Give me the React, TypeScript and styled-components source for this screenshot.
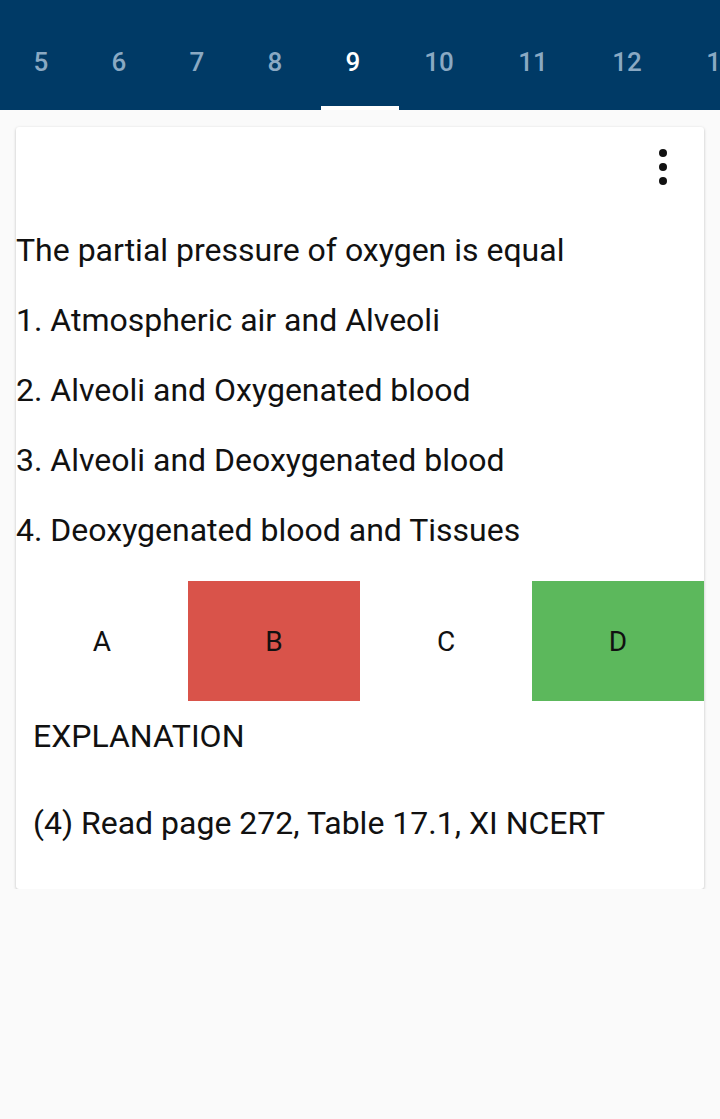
import React from 'react'
import styled, { createGlobalStyle } from 'styled-components'

const GlobalStyle = createGlobalStyle`
  body {
    margin: 0;
    background: #fafafa;
    font-family: Roboto, "Liberation Sans", sans-serif;
  }
`

const TabBar = styled.div`
  background: #003a66;
  height: 110px;
  display: flex;
  align-items: stretch;
  padding-left: 2px;
  overflow: hidden;
`

const Tab = styled.div<{ w: number; active?: boolean }>`
  position: relative;
  flex-shrink: 0;
  width: ${(p) => p.w}px;
  display: flex;
  align-items: center;
  justify-content: center;
  padding-top: 14px;
  box-sizing: border-box;
  font-size: 26px;
  font-weight: 500;
  color: ${(p) => (p.active ? '#ffffff' : '#8aa9c3')};
`

const Indicator = styled.span`
  position: absolute;
  left: 7px;
  bottom: 0;
  width: 78px;
  height: 4px;
  background: #ffffff;
`

const Card = styled.div`
  margin: 17px 16px 0;
  background: #ffffff;
  border-radius: 3px;
  box-shadow: 0 1px 3px rgba(0, 0, 0, 0.25);
  padding-bottom: 41px;
`

const CardTop = styled.div`
  height: 88px;
  display: flex;
  justify-content: flex-end;
  padding-right: 37px;
  padding-top: 22px;
  box-sizing: border-box;
`

const Kebab = styled.div`
  display: flex;
  flex-direction: column;
  gap: 6px;

  span {
    width: 8px;
    height: 8px;
    border-radius: 50%;
    background: #111;
  }
`

const Line = styled.div`
  height: 70px;
  display: flex;
  align-items: center;
  font-size: 32px;
  color: #111;
`

const Options = styled.div`
  display: grid;
  grid-template-columns: repeat(4, 1fr);
  height: 120px;
  margin-top: 16px;
`

const Option = styled.div<{ tone?: 'wrong' | 'right' }>`
  display: flex;
  align-items: center;
  justify-content: center;
  font-size: 28px;
  color: #111;
  background: ${(p) => (p.tone === 'wrong' ? '#d9534a' : p.tone === 'right' ? '#5cb85c' : 'transparent')};
`

const ExplTitle = styled.div`
  height: 50px;
  margin-top: 10px;
  padding-left: 17px;
  display: flex;
  align-items: center;
  font-size: 32px;
  color: #111;
`

const ExplBody = styled(ExplTitle)`
  margin-top: 37px;
`

const tabs = [
  { n: '5', w: 78 },
  { n: '6', w: 78 },
  { n: '7', w: 78 },
  { n: '8', w: 78 },
  { n: '9', w: 78 },
  { n: '10', w: 94 },
  { n: '11', w: 94 },
  { n: '12', w: 94 },
  { n: '13', w: 94 },
]

const lines = [
  'The partial pressure of oxygen is equal',
  '1. Atmospheric air and Alveoli',
  '2. Alveoli and Oxygenated blood',
  '3. Alveoli and Deoxygenated blood',
  '4. Deoxygenated blood and Tissues',
]

export default function App() {
  return (
    <>
      <GlobalStyle />
      <TabBar>
        {tabs.map((t) => (
          <Tab key={t.n} w={t.w} active={t.n === '9'}>
            {t.n}
            {t.n === '9' ? <Indicator /> : null}
          </Tab>
        ))}
      </TabBar>
      <Card>
        <CardTop>
          <Kebab>
            <span />
            <span />
            <span />
          </Kebab>
        </CardTop>
        {lines.map((l) => (
          <Line key={l}>{l}</Line>
        ))}
        <Options>
          <Option>A</Option>
          <Option tone="wrong">B</Option>
          <Option>C</Option>
          <Option tone="right">D</Option>
        </Options>
        <ExplTitle>EXPLANATION</ExplTitle>
        <ExplBody>(4) Read page 272, Table 17.1, XI NCERT</ExplBody>
      </Card>
    </>
  )
}
